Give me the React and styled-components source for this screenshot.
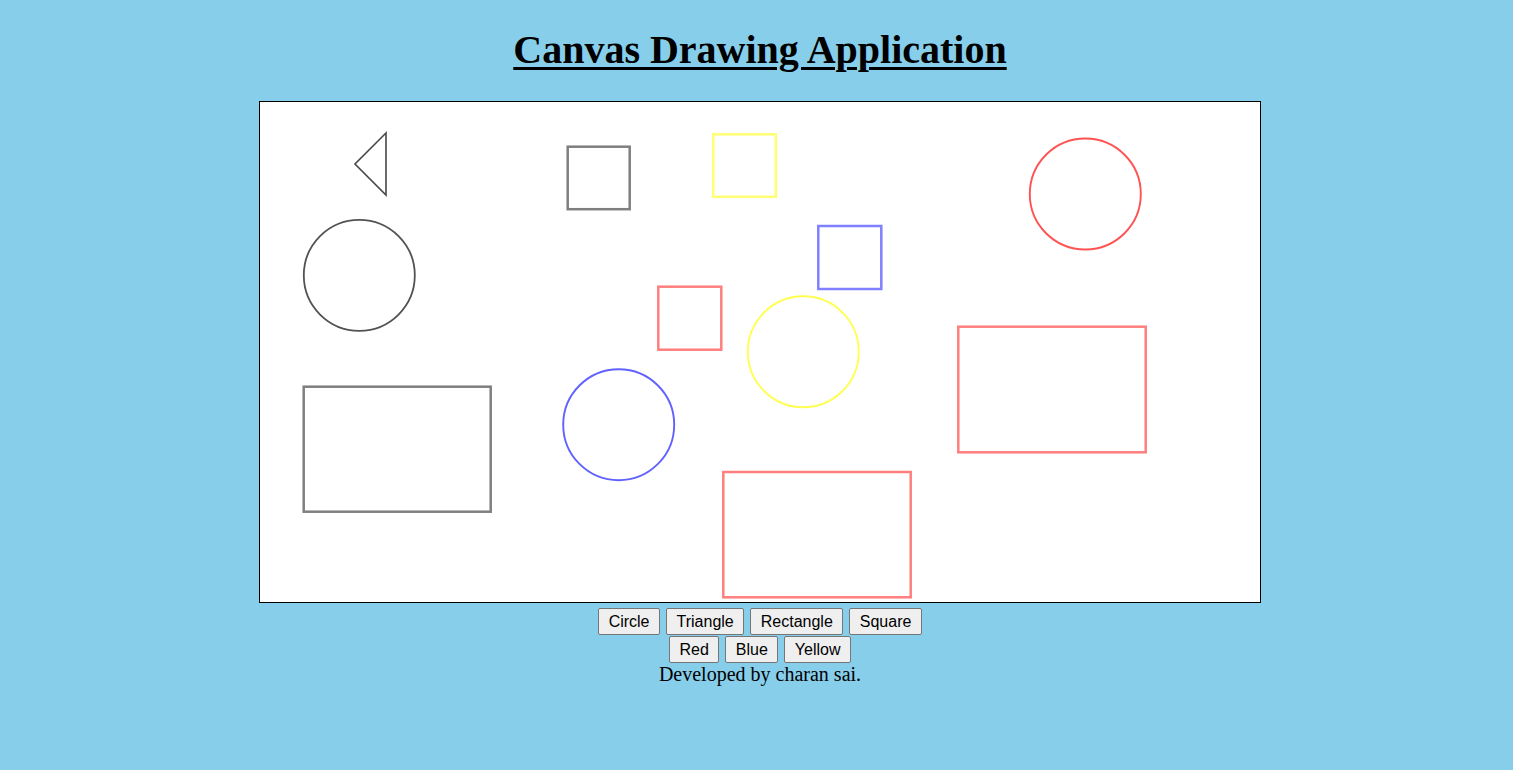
import React from "react";
import styled, { createGlobalStyle } from "styled-components";

const GlobalStyle = createGlobalStyle`
  html, body {
    margin: 0;
    padding: 0;
    background: #87ceeb;
  }
  body {
    font-family: "Liberation Serif", "Times New Roman", serif;
    color: #000;
  }
`;

const Page = styled.div`
  min-height: 770px;
  padding: 27px 0 0 7px;
  box-sizing: border-box;
  display: flex;
  flex-direction: column;
  align-items: center;
`;

const Title = styled.h1`
  margin: 0;
  font-family: "Liberation Serif", "Times New Roman", serif;
  font-size: 40px;
  font-weight: bold;
  line-height: 46px;
  text-decoration: underline;
  text-decoration-thickness: 3px;
  text-underline-offset: 4px;
`;

const Board = styled.svg`
  display: block;
  margin-top: 28px;
  width: 1000px;
  height: 500px;
  background: #fff;
  border: 1px solid #000;
`;

const Controls = styled.div`
  margin-top: 5px;
  display: flex;
  flex-direction: column;
  align-items: center;
  gap: 1px;
`;

const ButtonRow = styled.div`
  display: flex;
  gap: 6px;
`;

const ToolButton = styled.button`
  font-family: "Liberation Sans", Arial, sans-serif;
  font-size: 16px;
  line-height: 19px;
  padding: 3px 9.5px;
  color: #000;
  background: #efefef;
  border: 1px solid #767676;
  border-radius: 2px;
  cursor: pointer;
`;

const Credit = styled.div`
  font-family: "Liberation Serif", "Times New Roman", serif;
  font-size: 20px;
  line-height: 23px;
  margin-top: -1px;
`;

const shapes = [
  { type: "tri", points: "126,31 95,62 126,93", color: "#000", op: 0.72, w: 1.6 },
  { type: "circle", cx: 99.3, cy: 173.3, r: 55.5, color: "#000", op: 0.68, w: 1.8 },
  { type: "rect", x: 43.7, y: 284.7, w2: 187, h: 125, color: "#000", op: 0.5, w: 2.5 },
  { type: "rect", x: 307.7, y: 44.7, w2: 62, h: 62.5, color: "#000", op: 0.5, w: 2.5 },
  { type: "rect", x: 453.3, y: 32.3, w2: 62.5, h: 62.5, color: "#ffff00", op: 0.55, w: 2.5 },
  { type: "rect", x: 558.3, y: 124, w2: 63, h: 63, color: "#0000ff", op: 0.5, w: 2.5 },
  { type: "rect", x: 398.3, y: 184.7, w2: 63, h: 63, color: "#ff0000", op: 0.5, w: 2.5 },
  { type: "rect", x: 698.3, y: 224.7, w2: 187.4, h: 125.6, color: "#ff0000", op: 0.5, w: 2.5 },
  { type: "rect", x: 463.3, y: 370, w2: 187.4, h: 125.3, color: "#ff0000", op: 0.5, w: 2.5 },
  { type: "circle", cx: 825.3, cy: 92, r: 55.5, color: "#ff0000", op: 0.68, w: 1.9 },
  { type: "circle", cx: 358.7, cy: 322.7, r: 55.5, color: "#0000ff", op: 0.62, w: 1.9 },
  { type: "circle", cx: 543.3, cy: 249.8, r: 55.5, color: "#ffff00", op: 0.68, w: 1.9 },
];

function Shape({ s }) {
  const common = {
    fill: "none",
    stroke: s.color,
    strokeOpacity: s.op,
    strokeWidth: s.w,
  };
  if (s.type === "circle") return <circle cx={s.cx} cy={s.cy} r={s.r} {...common} />;
  if (s.type === "tri") return <polygon points={s.points} {...common} strokeLinejoin="miter" />;
  return <rect x={s.x} y={s.y} width={s.w2} height={s.h} {...common} />;
}

export default function App() {
  return (
    <>
      <GlobalStyle />
      <Page>
        <Title>Canvas Drawing Application</Title>
        <Board viewBox="0 0 1000 500">
          {shapes.map((s, i) => (
            <Shape key={i} s={s} />
          ))}
        </Board>
        <Controls>
          <ButtonRow>
            <ToolButton>Circle</ToolButton>
            <ToolButton>Triangle</ToolButton>
            <ToolButton>Rectangle</ToolButton>
            <ToolButton>Square</ToolButton>
          </ButtonRow>
          <ButtonRow>
            <ToolButton>Red</ToolButton>
            <ToolButton>Blue</ToolButton>
            <ToolButton>Yellow</ToolButton>
          </ButtonRow>
          <Credit>Developed by charan sai.</Credit>
        </Controls>
      </Page>
    </>
  );
}
